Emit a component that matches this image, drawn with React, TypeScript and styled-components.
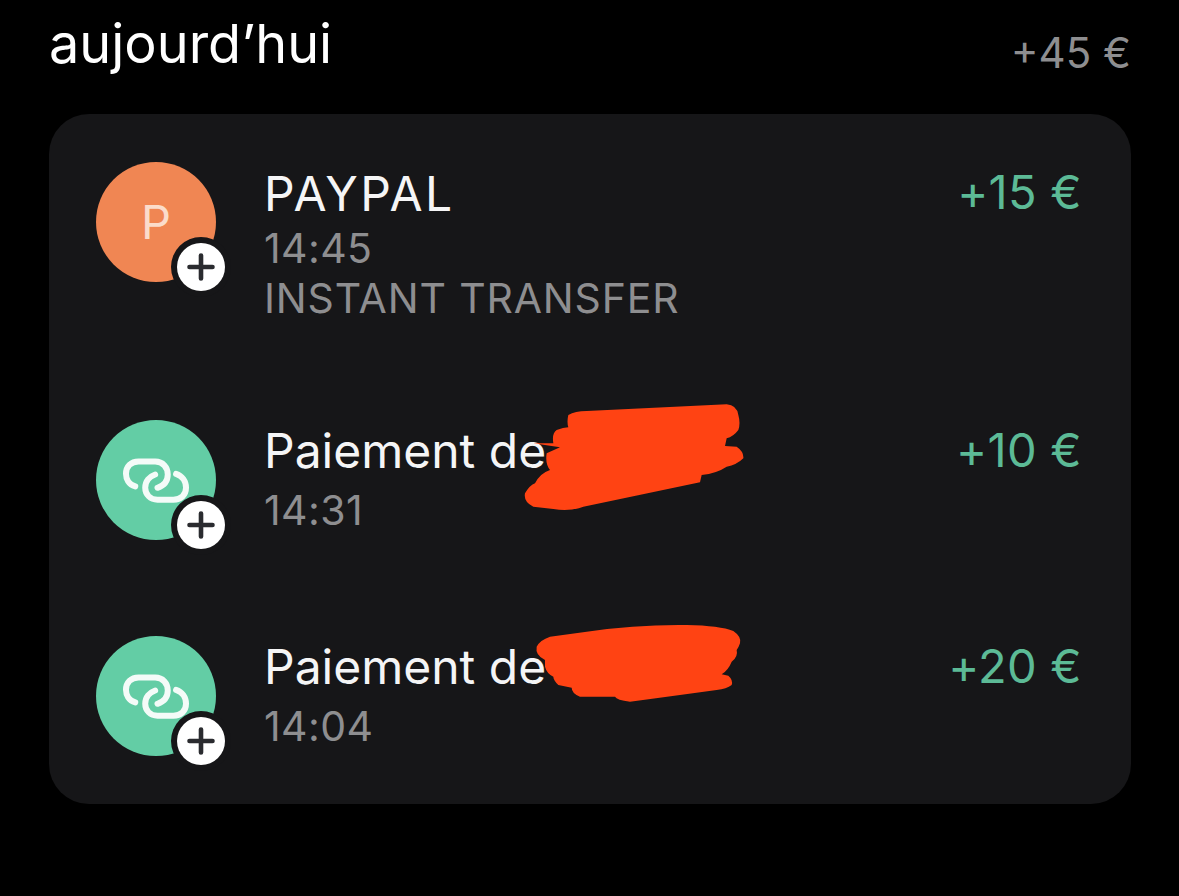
import styled, { createGlobalStyle } from 'styled-components';

const GlobalStyle = createGlobalStyle`
  html, body {
    margin: 0;
    padding: 0;
    background: #000;
    font-family: 'Inter', 'Liberation Sans', sans-serif;
  }
`;

const Plus = () => (
  <svg width="28" height="28" viewBox="0 0 28 28" aria-hidden="true">
    <path d="M14 2.5v23M2.5 14h23" stroke="#2a2b2f" strokeWidth="4.6" strokeLinecap="round" />
  </svg>
);

const LinkIcon = () => (
  <svg width="68" height="47" viewBox="125 140 205 140" fill="none" aria-hidden="true">
    <path
      d="M165 228C145 222 137 205 137 190C137 168 152 153 175 153H225C248 153 263 170 263 192C263 212 250 226 232 232"
      stroke="#f4fbf8"
      strokeWidth="18"
      strokeLinecap="round"
    />
    <path
      d="M288 190C306 196 318 212 318 232C318 254 302 268 280 268H232C210 268 195 252 195 232C195 212 208 198 225 192"
      stroke="#f4fbf8"
      strokeWidth="18"
      strokeLinecap="round"
    />
  </svg>
);

const ScribbleOne = () => (
  <svg width="240" height="125" viewBox="0 0 720 375" aria-hidden="true">
    <path
      fill="#ff4313"
      d="M145 60Q165 48 200 48L620 28Q650 30 655 60Q662 85 655 105Q640 125 620 130L615 153L650 155Q672 170 670 190Q650 210 620 215Q590 235 545 240L540 262L190 335Q150 350 100 342L40 335Q10 320 15 295Q30 270 45 265Q60 235 90 225Q75 205 80 175L120 157L40 145L100 145Q95 115 110 105Q130 97 145 97Q140 80 145 60Z"
    />
  </svg>
);

const ScribbleTwo = () => (
  <svg width="240" height="95" viewBox="0 0 720 285" aria-hidden="true">
    <path
      fill="#ff4313"
      d="M50 95Q60 75 90 65L200 50Q350 28 500 30Q600 32 640 48Q665 65 660 85Q655 100 650 105Q655 125 635 140Q625 165 605 178L625 182Q640 195 635 210Q620 222 590 225L480 240L330 260Q290 255 285 245L180 245Q155 235 155 218L115 210Q100 195 100 185Q80 175 75 155L75 135Q45 120 50 95Z"
    />
  </svg>
);

type Tx = {
  id: number;
  title: string;
  time: string;
  note?: string;
  amount: string;
  avatar: 'letter' | 'link';
  scribble?: 'one' | 'two';
};

const transactions: Tx[] = [
  { id: 1, title: 'PAYPAL', time: '14:45', note: 'INSTANT TRANSFER', amount: '+15 €', avatar: 'letter' },
  { id: 2, title: 'Paiement de', time: '14:31', amount: '+10 €', avatar: 'link', scribble: 'one' },
  { id: 3, title: 'Paiement de', time: '14:04', amount: '+20 €', avatar: 'link', scribble: 'two' },
];

const App = () => (
  <S.Page>
    <GlobalStyle />
    <S.Header>
      <S.Heading>aujourd’hui</S.Heading>
      <S.Total>+45 €</S.Total>
    </S.Header>
    <S.Card>
      {transactions.map((tx) => (
        <S.Row key={tx.id} $tall={!!tx.note}>
          <S.Avatar $kind={tx.avatar}>
            {tx.avatar === 'letter' ? <S.Letter>P</S.Letter> : <LinkIcon />}
            <S.Badge>
              <Plus />
            </S.Badge>
          </S.Avatar>
          <S.Info>
            <S.Title $tall={!!tx.note}>{tx.title}</S.Title>
            <S.Meta>{tx.time}</S.Meta>
            {tx.note && <S.Meta $caps>{tx.note}</S.Meta>}
          </S.Info>
          <S.Amount>{tx.amount}</S.Amount>
          {tx.scribble === 'one' && (
            <S.Redaction $left={424} $top={-25}>
              <ScribbleOne />
            </S.Redaction>
          )}
          {tx.scribble === 'two' && (
            <S.Redaction $left={424} $top={-21}>
              <ScribbleTwo />
            </S.Redaction>
          )}
        </S.Row>
      ))}
    </S.Card>
  </S.Page>
);

const S = {
  Page: styled.div`
    width: 1179px;
    height: 896px;
    padding: 14px 48px 0 49px;
    box-sizing: border-box;
    background: #000;
    overflow: hidden;
  `,
  Header: styled.div`
    display: flex;
    justify-content: space-between;
    align-items: flex-start;
    height: 100px;
  `,
  Heading: styled.h1`
    margin: 0;
    font-size: 54px;
    line-height: 60px;
    font-weight: 400;
    color: #fff;
  `,
  Total: styled.div`
    margin-top: 13px;
    font-size: 42px;
    line-height: 52px;
    color: #8e8e90;
  `,
  Card: styled.div`
    height: 690px;
    box-sizing: border-box;
    padding: 48px 49px 0 47px;
    background: #161618;
    border-radius: 40px;
  `,
  Row: styled.div<{ $tall: boolean }>`
    position: relative;
    display: flex;
    align-items: flex-start;
    gap: 48px;
    height: ${(p) => (p.$tall ? '258px' : '216px')};
  `,
  Avatar: styled.div<{ $kind: 'letter' | 'link' }>`
    position: relative;
    flex: none;
    display: flex;
    align-items: center;
    justify-content: center;
    width: 120px;
    height: 120px;
    border-radius: 50%;
    background: ${(p) => (p.$kind === 'letter' ? '#f08653' : '#63cda5')};
  `,
  Letter: styled.span`
    font-size: 47px;
    line-height: 60px;
    font-weight: 400;
    color: #fbdccb;
  `,
  Badge: styled.div`
    position: absolute;
    left: 81px;
    top: 81px;
    display: flex;
    align-items: center;
    justify-content: center;
    width: 48px;
    height: 48px;
    border-radius: 50%;
    background: #fff;
    box-shadow: 0 0 0 6px #161618;
  `,
  Info: styled.div`
    flex: 1;
    display: flex;
    flex-direction: column;
    margin-top: 3px;
  `,
  Title: styled.div<{ $tall: boolean }>`
    font-size: 48px;
    line-height: 58px;
    margin-top: ${(p) => (p.$tall ? '0' : '-1px')};
    margin-bottom: ${(p) => (p.$tall ? '0' : '5px')};
    letter-spacing: ${(p) => (p.$tall ? '2.3px' : '0')};
    color: #f5f5f6;
  `,
  Meta: styled.div<{ $caps?: boolean }>`
    font-size: 41px;
    line-height: 50px;
    letter-spacing: ${(p) => (p.$caps ? '0.85px' : '0.4px')};
    color: #8e8e90;
  `,
  Amount: styled.div`
    margin-top: 2px;
    font-size: 47px;
    line-height: 56px;
    letter-spacing: 0.3px;
    color: #5cba96;
  `,
  Redaction: styled.div<{ $left: number; $top: number }>`
    position: absolute;
    left: ${(p) => p.$left}px;
    top: ${(p) => p.$top}px;
    line-height: 0;
  `,
};

export default App;
